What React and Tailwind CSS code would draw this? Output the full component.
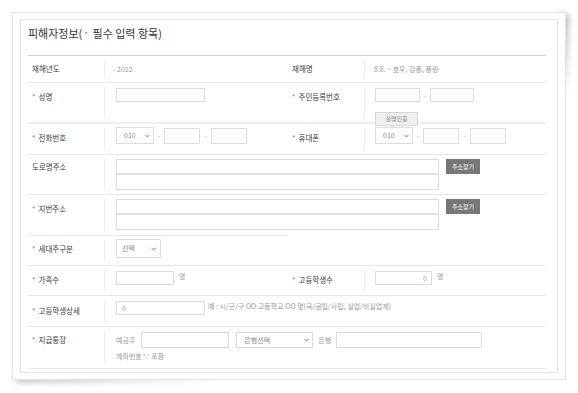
import React from 'react';

const font = { fontFamily: '"Noto Sans CJK KR", "Noto Sans", sans-serif' };

const Star = () => <span className="text-[#e0524f] mr-[3px]">*</span>;

const Chevron = () => (
  <svg width="5" height="4" viewBox="0 0 5 4" className="shrink-0">
    <path d="M0.5 0.8 L2.5 3 L4.5 0.8" fill="none" stroke="#777" strokeWidth="0.9" />
  </svg>
);

const Label = ({ children, req, pt = 'pt-[5px]' }) => (
  <div className="w-[77px] shrink-0 py-[4px]">
    <div className={`h-full border-r border-[#ececec] pl-[4px] ${pt} text-[7.5px] leading-[10px] text-[#3a3a3a]`}>
      {req && <Star />}
      {children}
    </div>
  </div>
);

const Box = ({ className = '', children }) => (
  <div className={`border border-[#dcdcdc] bg-white text-[7px] text-[#999] ${className}`}>{children}</div>
);

const Select = ({ text, className = '' }) => (
  <div className={`flex items-center justify-between border border-[#dcdcdc] bg-white text-[7px] text-[#888] ${className}`}>
    <span>{text}</span>
    <Chevron />
  </div>
);

const Dash = () => <span className="text-[7px] text-[#aaa] mx-[4px]">-</span>;

const PhoneField = () => (
  <div className="flex items-center">
    <Select text="010" className="w-[38px] h-[17px] pl-[7px] pr-[3px]" />
    <Dash />
    <Box className="w-[36px] h-[16px]" />
    <Dash />
    <Box className="w-[36px] h-[16px]" />
  </div>
);

const AddressField = () => (
  <div className="flex">
    <div className="w-[323px]">
      <Box className="h-[15px]" />
      <Box className="h-[16px]" />
    </div>
    <button className="ml-[7px] w-[34px] h-[15px] bg-[#777] text-white text-[6px] leading-none">주소찾기</button>
  </div>
);

export default function App() {
  return (
    <div className="relative w-[578px] h-[393px] bg-white pt-[12px] pl-[12px]" style={font}>
      {/* lifted-corner shadows */}
      <div className="absolute left-[560px] top-[14px] w-[8px] h-[80px] bg-gradient-to-b from-[rgba(0,0,0,0.35)] to-transparent blur-[3px]" />
      <div className="absolute left-[16px] top-[376px] w-[200px] h-[6px] bg-gradient-to-r from-[rgba(0,0,0,0.3)] to-transparent blur-[3px]" />

      <div className="relative w-[554px] h-[368px] border border-[#e3e3e3] bg-white pt-[6px] pl-[7px]">
        <div className="w-[538px] h-[354px] border border-[#e3e3e3] px-[7px]">
          <h2 className="pt-[6px] pb-[13px] text-[11px] leading-[14px] text-[#333]">
            피해자정보(<span className="text-[#e0524f] text-[8px] mx-[2px]">*</span> 필수 입력 항목)
          </h2>

          <div className="w-[518px] border-t border-[#cfcfcf]">
            {/* 재해년도 / 재해명 */}
            <div className="flex h-[27px] border-b border-[#e8e8e8]">
              <Label pt="pt-[4px]">재해년도</Label>
              <div className="w-[183px] pl-[8px] pt-[8px] text-[7px] leading-[10px] text-[#999]">- 2022</div>
              <Label pt="pt-[4px]">재해명</Label>
              <div className="flex-1 pl-[9px] pt-[8px] text-[7px] leading-[10px] text-[#999]">8.8. ~ 호우, 강풍, 풍랑</div>
            </div>

            {/* 성명 / 주민등록번호 */}
            <div className="flex h-[41px] border-b-2 border-[#efefef]">
              <Label req>성명</Label>
              <div className="w-[183px] pl-[11px] pt-[5px]">
                <Box className="w-[89px] h-[14px]" />
              </div>
              <Label req>주민등록번호</Label>
              <div className="flex-1 pl-[10px] pt-[5px]">
                <div className="flex items-center">
                  <Box className="w-[45px] h-[14px]" />
                  <Dash />
                  <Box className="w-[44px] h-[14px]" />
                </div>
                <button className="mt-[2px] w-[43px] h-[14px] bg-[#efefef] border border-[#d5d5d5] text-[6px] leading-none text-[#888]">실명인증</button>
              </div>
            </div>

            {/* 전화번호 / 휴대폰 */}
            <div className="flex h-[31px] border-b border-[#e8e8e8]">
              <Label req>전화번호</Label>
              <div className="w-[183px] pl-[11px] pt-[3px]">
                <PhoneField />
              </div>
              <Label req>휴대폰</Label>
              <div className="flex-1 pl-[10px] pt-[3px]">
                <PhoneField />
              </div>
            </div>

            {/* 도로명주소 */}
            <div className="flex h-[40px] border-b border-[#e8e8e8]">
              <Label pt="pt-[3px]">도로명주소</Label>
              <div className="flex-1 pl-[11px] pt-[4px]">
                <AddressField />
              </div>
            </div>

            {/* 지번주소 */}
            <div className="flex h-[40px]">
              <Label req>지번주소</Label>
              <div className="flex-1 pl-[11px] pt-[4px]">
                <AddressField />
              </div>
            </div>
            <div className="w-[260px] h-px bg-[#e8e8e8]" />

            {/* 세대주구분 */}
            <div className="flex h-[30px] border-b border-[#e8e8e8]">
              <Label req pt="pt-[4px]">세대주구분</Label>
              <div className="flex-1 pl-[11px] pt-[3px]">
                <Select text="선택" className="w-[45px] h-[19px] pl-[5px] pr-[4px]" />
              </div>
            </div>

            {/* 가족수 / 고등학생수 */}
            <div className="flex h-[30px] border-b border-[#e8e8e8]">
              <Label req>가족수</Label>
              <div className="w-[183px] pl-[11px] pt-[5px] flex items-start">
                <Box className="w-[58px] h-[14px]" />
                <span className="ml-[5px] text-[7px] leading-[10px] text-[#999]">명</span>
              </div>
              <Label req>고등학생수</Label>
              <div className="flex-1 pl-[10px] pt-[5px] flex items-start">
                <Box className="w-[57px] h-[14px] flex items-center justify-end pr-[4px]">0</Box>
                <span className="ml-[5px] text-[7px] leading-[10px] text-[#999]">명</span>
              </div>
            </div>

            {/* 고등학생상세 */}
            <div className="flex h-[31px] border-b border-[#e8e8e8]">
              <Label req pt="pt-[6px]">고등학생상세</Label>
              <div className="flex-1 pl-[11px] pt-[5px] flex items-start">
                <Box className="w-[89px] h-[14px] flex items-center pl-[5px]">0</Box>
                <span className="ml-[3px] text-[7px] leading-[10px] text-[#999]">
                  예 : 시/군/구 OO 고등학교 OO 명(국/공립/사립, 실업/비실업계)
                </span>
              </div>
            </div>

            {/* 지급통장 */}
            <div className="flex h-[42px] border-b border-[#e8e8e8]">
              <Label req pt="pt-[4px]">지급통장</Label>
              <div className="flex-1 pl-[11px] pt-[5px]">
                <div className="flex items-center text-[7px] text-[#999]">
                  <span>예금주</span>
                  <Box className="ml-[6px] w-[88px] h-[16px]" />
                  <Select text="은행선택" className="ml-[7px] w-[77px] h-[16px] pl-[7px] pr-[3px]" />
                  <span className="ml-[5px]">은행</span>
                  <Box className="ml-[5px] w-[146px] h-[16px]" />
                </div>
                <div className="mt-[3px] text-[7px] leading-[10px] text-[#999]">계좌번호 '-' 포함</div>
              </div>
            </div>
          </div>
        </div>
      </div>
    </div>
  );
}
